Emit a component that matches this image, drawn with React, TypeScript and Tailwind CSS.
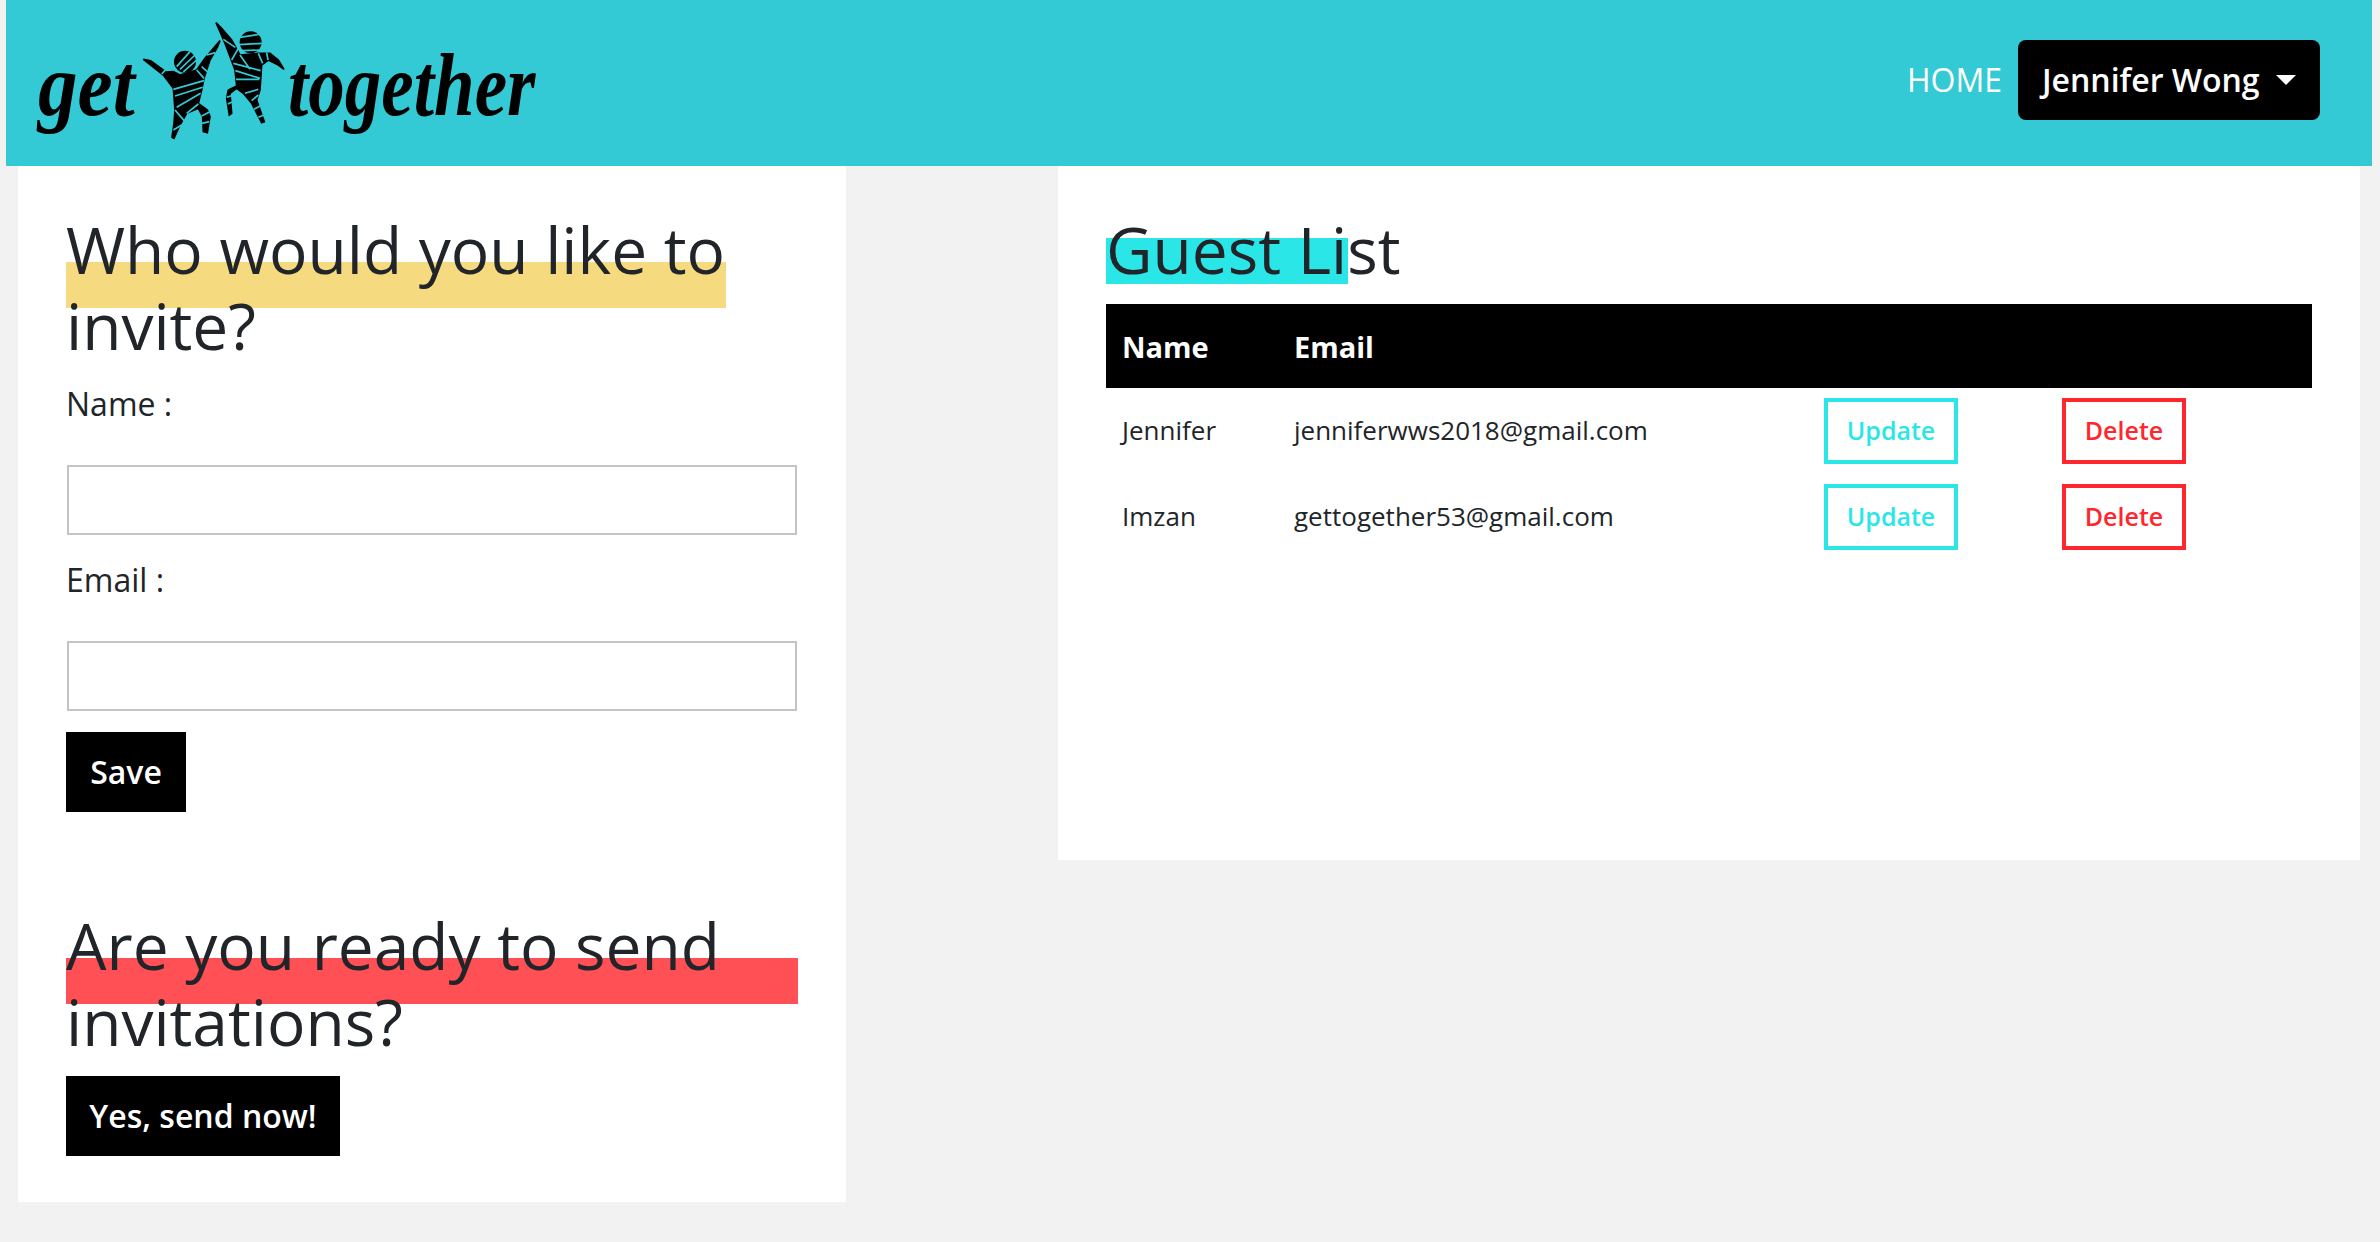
import React from 'react';

const guests = [
  { name: 'Jennifer', email: 'jenniferwws2018@gmail.com' },
  { name: 'Imzan', email: 'gettogether53@gmail.com' },
];

const Logo = () => (
  <svg width="540" height="140" viewBox="0 0 540 140" className="block -ml-[6px]">
    <text transform="translate(38 105) scale(0.9 1)" fontFamily="'Liberation Serif', serif" fontWeight="700" fontStyle="italic" fontSize="88" fill="#000">get</text>
    <text transform="translate(288 105) scale(0.83 1)" fontFamily="'Liberation Serif', serif" fontWeight="700" fontStyle="italic" fontSize="88" fill="#000">together</text>
    <g transform="translate(130 0) scale(0.3333)">
      <circle cx="165" cy="155" r="33" fill="#000" />
      <path d="M40 148 L62 152 L108 186 L130 185 L150 195 L200 180 L225 145 L270 92 L262 112 L240 150 L222 205 L215 240 L205 280 L232 300 L240 320 L232 368 L220 365 L218 320 L205 295 L170 310 L150 345 L132 385 L126 382 L132 340 L135 300 L130 235 L100 195 Z" fill="#000" stroke="#000" strokeWidth="5" />
      <circle cx="362" cy="97" r="33" fill="#000" />
      <path d="M258 38 L275 55 L305 90 L330 135 L385 130 L420 130 L445 150 L462 178 L445 165 L415 150 L395 165 L390 240 L380 270 L403 335 L395 338 L365 280 L340 250 L320 235 L300 250 L305 310 L298 315 L290 265 L295 240 L320 228 L315 180 L285 100 L270 65 Z" fill="#000" stroke="#000" strokeWidth="5" />
      <g stroke="#33cad5" strokeWidth="5" fill="none">
        <path d="M140 170 L180 125 M150 178 L195 135 M160 186 L200 150" />
        <path d="M330 82 L396 72 M328 104 L396 100 M335 122 L392 120" />
        <path d="M95 192 L108 178 M200 180 L222 205 M215 170 L238 190 M230 135 L256 128" />
        <path d="M130 238 L222 212 M135 258 L218 232 M140 292 L212 250 M135 300 L165 335 M205 282 L170 310 M215 318 L240 305 M216 340 L238 335 M130 360 L155 345" />
        <path d="M280 88 L316 112 M305 150 L325 115 M330 135 L360 178 M310 160 L392 182 M316 182 L390 205 M318 208 L388 208 M345 250 L385 238 M365 272 L385 255 M372 298 L396 285 M385 322 L402 315" />
        <path d="M385 130 L398 160 M410 128 L414 150 M290 262 L322 252 M294 282 L306 276" />
      </g>
    </g>
  </svg>
);

const App: React.FC = () => {
  return (
    <div className="min-h-[1242px] bg-[#f2f2f2] font-['Open_Sans','Noto_Sans',sans-serif] text-[#212529]">
      {/* Nav */}
      <nav className="ml-[6px] mr-2 h-[166px] bg-[#33cad5] flex items-center justify-between pr-[52px] pb-[6px]">
        <Logo />
        <div className="flex items-center gap-4">
          <a className="text-[32px] leading-[48px] text-white">HOME</a>
          <button className="flex items-center h-20 w-[302px] pl-6 bg-black rounded-lg text-white text-[32px] font-semibold leading-[48px]">
            Jennifer Wong
            <span className="ml-4 w-0 h-0 border-x-[10px] border-x-transparent border-t-[10px] border-t-white"></span>
          </button>
        </div>
      </nav>

      <div className="flex items-start">
        {/* Invite form */}
        <div className="ml-[18px] w-[828px] h-[1036px] bg-white pt-[46px] px-12">
          <h2 className="relative isolate text-[64px] leading-[76px] font-normal mb-4">
            <span className="absolute -z-10 left-0 top-[50px] w-[660px] h-[46px] bg-[#f5da7f]"></span>
            Who would you like to invite?
          </h2>
          <label className="block text-[32px] leading-[48px] mb-[37px]">Name :</label>
          <input className="block w-[730px] h-[70px] ml-px border-2 border-[#c4c4c4] bg-white mb-[21px]" />
          <label className="block text-[32px] leading-[48px] mb-[37px]">Email :</label>
          <input className="block w-[730px] h-[70px] ml-px border-2 border-[#c4c4c4] bg-white mb-[21px]" />
          <button className="block w-[120px] h-20 bg-black text-white text-[32px] font-semibold">Save</button>
          <h2 className="relative isolate mt-[96px] text-[64px] leading-[76px] font-normal mb-4">
            <span className="absolute -z-10 left-0 top-[50px] w-full h-[46px] bg-[#ff5055]"></span>
            Are you ready to send invitations?
          </h2>
          <button className="block w-[274px] h-20 bg-black text-white text-[32px] font-semibold">Yes, send now!</button>
        </div>

        {/* Guest list */}
        <div className="ml-[212px] w-[1302px] h-[694px] bg-white pt-[46px] px-12">
          <h2 className="relative isolate text-[64px] leading-[76.8px] font-normal mb-[15px]">
            <span className="absolute -z-10 left-0 top-[26px] w-[242px] h-[46px] bg-[#2ae6e6]"></span>
            Guest List
          </h2>
          <table className="w-[1206px] table-fixed border-collapse text-[26px]">
            <colgroup>
              <col className="w-[173px]" />
              <col className="w-[545px]" />
              <col className="w-[238px]" />
              <col className="w-[250px]" />
            </colgroup>
            <thead>
              <tr className="h-[84px] bg-black text-white text-left">
                <th className="pl-4 pt-[2px] font-bold text-[29px]">Name</th>
                <th className="pl-[15px] pt-[2px] font-bold text-[29px]">Email</th>
                <th></th>
                <th></th>
              </tr>
            </thead>
            <tbody>
              {guests.map((guest) => (
                <tr key={guest.email} className="h-[86px]">
                  <td className="pl-4">{guest.name}</td>
                  <td className="pl-[15px]">{guest.email}</td>
                  <td>
                    <button className="w-[134px] h-[66px] border-4 border-[#2ae6e6] text-[#2ae6e6] text-[25px] font-semibold">Update</button>
                  </td>
                  <td>
                    <button className="w-[124px] h-[66px] border-4 border-[#ff262e] text-[#ff262e] text-[25px] font-semibold">Delete</button>
                  </td>
                </tr>
              ))}
            </tbody>
          </table>
        </div>
      </div>
    </div>
  );
};

export default App;
